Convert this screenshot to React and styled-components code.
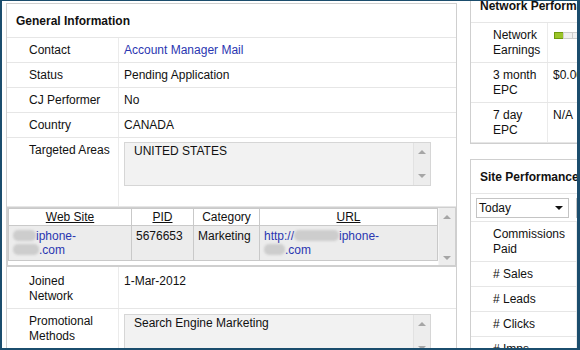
import React from 'react';
import styled, { createGlobalStyle } from 'styled-components';

const GlobalStyle = createGlobalStyle`
  html, body {
    margin: 0;
    padding: 0;
    background: #fff;
  }
  body {
    font-family: "Liberation Sans", Arial, sans-serif;
    font-size: 12px;
    color: #111;
  }
`;

const Frame = styled.div`
  box-sizing: border-box;
  width: 580px;
  height: 350px;
  overflow: hidden;
  border-style: solid;
  border-color: #1b4d6d;
  border-width: 1px 3px 2px 2px;
  padding: 2px 0 0 4px;
  display: flex;
  align-items: flex-start;
  gap: 13px;
  background: #fff;
  line-height: 15px;
`;

const Panel = styled.section`
  box-sizing: border-box;
  flex-shrink: 0;
  width: ${p => p.$width}px;
  border: 1px solid #cfcfcf;
  background: #fff;
`;

const PanelTitle = styled.h2`
  margin: 0;
  height: 33px;
  overflow: hidden;
  line-height: 35px;
  padding-left: 9px;
  font-size: 12px;
  font-weight: bold;
  color: #111;
  border-bottom: 1px solid #e6e6e6;
  white-space: nowrap;
`;

const Row = styled.div`
  display: grid;
  grid-template-columns: ${p => p.$label}px 1fr;
  border-bottom: 1px solid #e6e6e6;
`;

const Label = styled.div`
  padding: ${p => p.$top ?? 5}px 4px ${p => p.$bottom ?? 4}px 22px;
  border-right: 1px solid #ebebeb;
  white-space: nowrap;
`;

const Value = styled.div`
  padding: ${p => p.$top ?? 5}px 6px ${p => p.$bottom ?? 4}px 5px;
  white-space: nowrap;
`;

const Link = styled.a`
  color: #2a36b1;
  text-decoration: none;
`;

const ListBox = styled.div`
  box-sizing: border-box;
  width: 307px;
  height: 44px;
  display: flex;
  border: 1px solid #d6d6d6;
  background: #f2f2f2;
`;

const ListText = styled.div`
  flex: 1;
  padding: 1px 9px;
`;

const ScrollBar = styled.div`
  width: 17px;
  flex-shrink: 0;
  display: flex;
  flex-direction: column;
  justify-content: space-between;
  align-items: center;
  padding: ${p => p.$pad || '7px 0'};
  box-sizing: border-box;
  background: #ededed;
  border-left: 1px solid ${p => p.$edge || '#e2e2e2'};
`;

const Arrow = styled.span`
  width: 0;
  height: 0;
  border-left: 4px solid transparent;
  border-right: 4px solid transparent;
  ${p => (p.$down
    ? `border-top: 4px solid ${p.$color || '#a6a6a6'};`
    : `border-bottom: 4px solid ${p.$color || '#a6a6a6'};`)}
`;

const SitesWrap = styled.div`
  display: flex;
  height: 57px;
  border: 1px solid #cfcfcf;
  border-bottom-width: 2px;
`;

const SitesGrid = styled.div`
  display: grid;
  grid-template-columns: 123px 62px 66px 178px;
  align-self: flex-start;
  border-left: 1px solid #c9c9c9;
  border-top: 1px solid #c9c9c9;
  line-height: 14px;
`;

const HeadCell = styled.div`
  height: 16px;
  line-height: 17px;
  text-align: center;
  background: #fff;
  border-right: 1px solid #c9c9c9;
  border-bottom: 1px solid #c9c9c9;
  text-decoration: ${p => (p.$sortable ? 'underline' : 'none')};
`;

const DataCell = styled.div`
  height: 28px;
  padding: 3px 4px;
  background: #ececec;
  border-right: 1px solid #c9c9c9;
  border-bottom: 1px solid #c9c9c9;
  white-space: nowrap;
`;

const Blur = styled.span`
  display: inline-block;
  width: ${p => p.$w}px;
  height: 11px;
  border-radius: 5px;
  background: #cdcdcd;
  filter: blur(1.3px);
  vertical-align: -1px;
`;

const SideColumn = styled.div`
  flex-shrink: 0;
  width: 200px;
  margin-top: -15px;
  display: flex;
  flex-direction: column;
  gap: 15px;
`;

const Meter = styled.div`
  display: flex;
  margin: 4px 0 0 1px;
`;

const Segment = styled.span`
  box-sizing: border-box;
  width: 10px;
  height: 7px;
  margin-right: -1px;
  border: 1px solid ${p => (p.$on ? '#6f9a0e' : '#cdcdcd')};
  background: ${p => (p.$on ? '#9bc428' : '#f0f0f0')};
`;

const SelectRow = styled.div`
  display: flex;
  gap: 7px;
  padding: 4px 0 3px 5px;
  border-bottom: 1px solid #e6e6e6;
`;

const Select = styled.div`
  box-sizing: border-box;
  flex-shrink: 0;
  width: ${p => p.$width}px;
  height: 20px;
  display: flex;
  align-items: center;
  justify-content: space-between;
  padding: 0 5px 0 2px;
  border: 1px solid #c4c4c4;
  background: #fff;
`;

const generalRows = [
  { label: 'Contact', value: <Link href="#">Account Manager Mail</Link> },
  { label: 'Status', value: 'Pending Application' },
  { label: 'CJ Performer', value: 'No' },
  { label: 'Country', value: 'CANADA' },
];

const networkRows = [
  { label: ['Network', 'Earnings'], meter: true },
  { label: ['3 month', 'EPC'], value: '$0.00' },
  { label: ['7 day', 'EPC'], value: 'N/A' },
];

const siteRows = [
  ['Commissions', 'Paid'],
  ['# Sales'],
  ['# Leads'],
  ['# Clicks'],
  ['# Imps'],
];

function Lines({ parts }) {
  return parts.map((part, i) => (
    <React.Fragment key={part}>
      {i > 0 && <br />}
      {part}
    </React.Fragment>
  ));
}

function TextBox({ children }) {
  return (
    <ListBox>
      <ListText>{children}</ListText>
      <ScrollBar>
        <Arrow />
        <Arrow $down />
      </ScrollBar>
    </ListBox>
  );
}

function SitesTable() {
  return (
    <SitesWrap>
      <SitesGrid>
        <HeadCell $sortable>Web Site</HeadCell>
        <HeadCell $sortable>PID</HeadCell>
        <HeadCell>Category</HeadCell>
        <HeadCell $sortable>URL</HeadCell>
        <DataCell>
          <Link href="#"><Blur $w={23} />iphone-<br /><Blur $w={26} />.com</Link>
        </DataCell>
        <DataCell>5676653</DataCell>
        <DataCell>Marketing</DataCell>
        <DataCell>
          <Link href="#">http://<Blur $w={45} />iphone-<br /><Blur $w={21} />.com</Link>
        </DataCell>
      </SitesGrid>
      <ScrollBar $pad="7px 0 5px" $edge="#f6f6f6">
        <Arrow />
        <Arrow $down />
      </ScrollBar>
    </SitesWrap>
  );
}

export default function App() {
  return (
    <>
      <GlobalStyle />
      <Frame>
        <Panel $width={451}>
          <PanelTitle>General Information</PanelTitle>
          {generalRows.map(row => (
            <Row $label={112} key={row.label}>
              <Label>{row.label}</Label>
              <Value>{row.value}</Value>
            </Row>
          ))}
          <Row $label={112}>
            <Label>Targeted Areas</Label>
            <Value $top={4} $bottom={20}>
              <TextBox>UNITED STATES</TextBox>
            </Value>
          </Row>
          <SitesTable />
          <Row $label={112}>
            <Label $top={7}><Lines parts={['Joined', 'Network']} /></Label>
            <Value $top={7}>1-Mar-2012</Value>
          </Row>
          <Row $label={112}>
            <Label><Lines parts={['Promotional', 'Methods']} /></Label>
            <Value>
              <TextBox>Search Engine Marketing</TextBox>
            </Value>
          </Row>
        </Panel>

        <SideColumn>
          <Panel $width={200}>
            <PanelTitle>Network Performance</PanelTitle>
            {networkRows.map(row => (
              <Row $label={77} key={row.label.join(' ')}>
                <Label><Lines parts={row.label} /></Label>
                <Value>
                  {row.meter ? (
                    <Meter>
                      {Array.from({ length: 10 }, (_, i) => (
                        <Segment key={i} $on={i === 0} />
                      ))}
                    </Meter>
                  ) : row.value}
                </Value>
              </Row>
            ))}
          </Panel>

          <Panel $width={200}>
            <PanelTitle>Site Performance</PanelTitle>
            <SelectRow>
              <Select $width={93}>
                Today
                <Arrow $down $color="#111" />
              </Select>
              <Select $width={60} />
            </SelectRow>
            {siteRows.map(label => (
              <Row $label={106} key={label.join(' ')}>
                <Label><Lines parts={label} /></Label>
                <Value />
              </Row>
            ))}
          </Panel>
        </SideColumn>
      </Frame>
    </>
  );
}
